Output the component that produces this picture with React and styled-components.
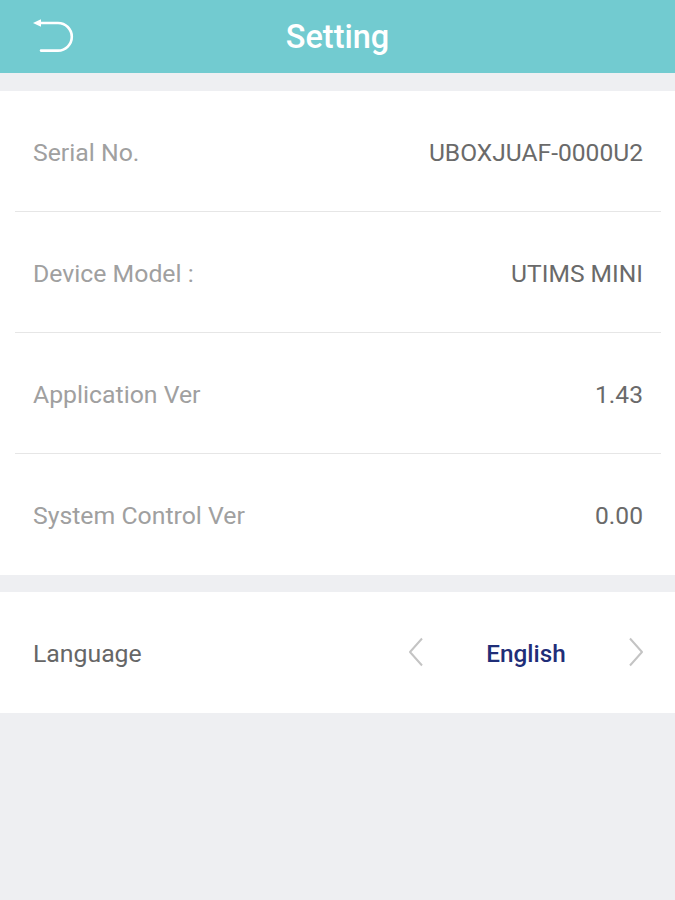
import React from 'react'
import styled, { createGlobalStyle } from 'styled-components'

const GlobalStyle = createGlobalStyle`
  html, body {
    margin: 0;
    padding: 0;
    background: #eeeff2;
  }
  body {
    font-family: Roboto, 'Liberation Sans', sans-serif;
  }
`

const rows = [
  { label: 'Serial No.', value: 'UBOXJUAF-0000U2' },
  { label: 'Device Model :', value: 'UTIMS MINI' },
  { label: 'Application Ver', value: '1.43' },
  { label: 'System Control Ver', value: '0.00' },
]

const BackIcon = () => (
  <svg width='44' height='38' viewBox='0 0 44 38' fill='none'>
    <path d='M1 5 L9 1.2 L9 8.8 Z' fill='#fff' />
    <path
      d='M8 5 H26 A13.8 13.8 0 0 1 26 32.6 H9'
      stroke='#fff'
      strokeWidth='2.6'
      strokeLinecap='round'
    />
  </svg>
)

const Chevron = ({ dir }) => (
  <svg width='18' height='30' viewBox='0 0 18 30' fill='none'>
    <path
      d={dir === 'left' ? 'M15 1.5 L3 15 L15 28.5' : 'M3 1.5 L15 15 L3 28.5'}
      stroke='#c4c4c4'
      strokeWidth='2'
      strokeLinejoin='round'
    />
  </svg>
)

const App = () => {
  return (
    <Page>
      <GlobalStyle />
      <Header>
        <BackButton>
          <BackIcon />
        </BackButton>
        <Title>Setting</Title>
        <span />
      </Header>
      <Section $top='18px'>
        {rows.map((r, i) => (
          <Row key={r.label} $divider={i < rows.length - 1}>
            <Label>{r.label}</Label>
            <Value>{r.value}</Value>
          </Row>
        ))}
      </Section>
      <Section $top='17px'>
        <Row>
          <Label $dark>Language</Label>
          <Picker>
            <Chevron dir='left' />
            <PickValue>English</PickValue>
            <Chevron dir='right' />
          </Picker>
        </Row>
      </Section>
    </Page>
  )
}

export default App

const Page = styled.div`
  min-height: 900px;
  background: #eeeff2;
`

const Header = styled.header`
  height: 73px;
  background: #72cbd0;
  display: grid;
  grid-template-columns: 1fr auto 1fr;
  align-items: center;
`

const BackButton = styled.div`
  padding-left: 32px;
  padding-top: 1px;
  display: flex;
  align-items: center;
`

const Title = styled.h1`
  margin: 0;
  color: #fff;
  font-size: 32.5px;
  font-weight: 500;
`

const Section = styled.section`
  margin-top: ${(p) => p.$top};
  background: #fff;
  padding: 0 14px 0 15px;
`

const Row = styled.div`
  height: 120px;
  padding: 0 18px;
  display: flex;
  align-items: center;
  justify-content: space-between;
  border-bottom: ${(p) => (p.$divider ? '1px solid #e6e6e6' : '1px solid transparent')};
`

const Label = styled.span`
  font-size: 24.8px;
  padding-top: 2px;
  color: ${(p) => (p.$dark ? '#666' : '#a0a0a0')};
`

const Value = styled.span`
  font-size: 24.6px;
  padding-top: 2px;
  color: #6a6a6a;
`

const Picker = styled.div`
  width: 238px;
  display: flex;
  align-items: center;
  justify-content: space-between;
  margin-right: -2px;
`

const PickValue = styled.span`
  font-size: 24.3px;
  font-weight: 500;
  padding-top: 2px;
  color: #1f2e78;
`
